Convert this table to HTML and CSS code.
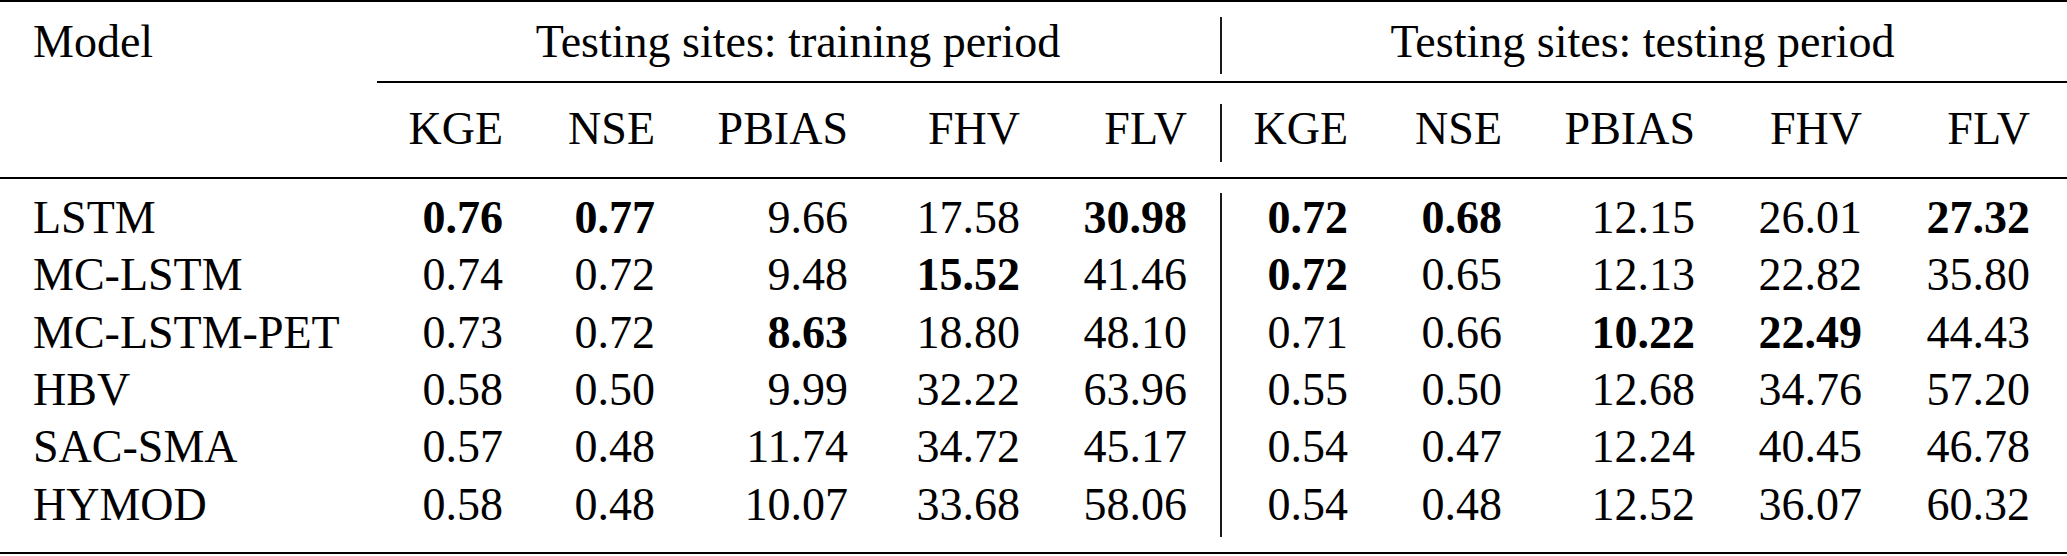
FILE: index.html
```html
<!DOCTYPE html>
<html lang="en">
<head>
<meta charset="utf-8">
<title>Results table</title>
<link rel="stylesheet" href="styles.css">
</head>
<body class="page">
<div class="tb-table">
  <div class="tb-rule tb-rule-top"></div>
  <div class="tb-line">
    <div class="tb-c tb-model">Model</div>
    <div class="tb-c tb-span tb-span-a tb-bar">Testing sites: training period</div>
    <div class="tb-c tb-span tb-span-b tb-end">Testing sites: testing period</div>
  </div>
  <div class="tb-rule tb-rule-cmid"></div>
  <div class="tb-line">
    <div class="tb-c tb-model"></div>
    <div class="tb-c">KGE</div>
    <div class="tb-c">NSE</div>
    <div class="tb-c">PBIAS</div>
    <div class="tb-c">FHV</div>
    <div class="tb-c tb-bar">FLV</div>
    <div class="tb-c">KGE</div>
    <div class="tb-c">NSE</div>
    <div class="tb-c">PBIAS</div>
    <div class="tb-c">FHV</div>
    <div class="tb-c tb-end">FLV</div>
  </div>
  <div class="tb-rule tb-rule-mid"></div>
  <div class="tb-data">
    <div class="tb-line">
      <div class="tb-c tb-model">LSTM</div>
      <div class="tb-c tb-best">0.76</div>
      <div class="tb-c tb-best">0.77</div>
      <div class="tb-c">9.66</div>
      <div class="tb-c">17.58</div>
      <div class="tb-c tb-bar tb-best">30.98</div>
      <div class="tb-c tb-best">0.72</div>
      <div class="tb-c tb-best">0.68</div>
      <div class="tb-c">12.15</div>
      <div class="tb-c">26.01</div>
      <div class="tb-c tb-end tb-best">27.32</div>
    </div>
    <div class="tb-line">
      <div class="tb-c tb-model">MC-LSTM</div>
      <div class="tb-c">0.74</div>
      <div class="tb-c">0.72</div>
      <div class="tb-c">9.48</div>
      <div class="tb-c tb-best">15.52</div>
      <div class="tb-c tb-bar">41.46</div>
      <div class="tb-c tb-best">0.72</div>
      <div class="tb-c">0.65</div>
      <div class="tb-c">12.13</div>
      <div class="tb-c">22.82</div>
      <div class="tb-c tb-end">35.80</div>
    </div>
    <div class="tb-line">
      <div class="tb-c tb-model">MC-LSTM-PET</div>
      <div class="tb-c">0.73</div>
      <div class="tb-c">0.72</div>
      <div class="tb-c tb-best">8.63</div>
      <div class="tb-c">18.80</div>
      <div class="tb-c tb-bar">48.10</div>
      <div class="tb-c">0.71</div>
      <div class="tb-c">0.66</div>
      <div class="tb-c tb-best">10.22</div>
      <div class="tb-c tb-best">22.49</div>
      <div class="tb-c tb-end">44.43</div>
    </div>
    <div class="tb-line">
      <div class="tb-c tb-model">HBV</div>
      <div class="tb-c">0.58</div>
      <div class="tb-c">0.50</div>
      <div class="tb-c">9.99</div>
      <div class="tb-c">32.22</div>
      <div class="tb-c tb-bar">63.96</div>
      <div class="tb-c">0.55</div>
      <div class="tb-c">0.50</div>
      <div class="tb-c">12.68</div>
      <div class="tb-c">34.76</div>
      <div class="tb-c tb-end">57.20</div>
    </div>
    <div class="tb-line">
      <div class="tb-c tb-model">SAC-SMA</div>
      <div class="tb-c">0.57</div>
      <div class="tb-c">0.48</div>
      <div class="tb-c">11.74</div>
      <div class="tb-c">34.72</div>
      <div class="tb-c tb-bar">45.17</div>
      <div class="tb-c">0.54</div>
      <div class="tb-c">0.47</div>
      <div class="tb-c">12.24</div>
      <div class="tb-c">40.45</div>
      <div class="tb-c tb-end">46.78</div>
    </div>
    <div class="tb-line">
      <div class="tb-c tb-model">HYMOD</div>
      <div class="tb-c">0.58</div>
      <div class="tb-c">0.48</div>
      <div class="tb-c">10.07</div>
      <div class="tb-c">33.68</div>
      <div class="tb-c tb-bar">58.06</div>
      <div class="tb-c">0.54</div>
      <div class="tb-c">0.48</div>
      <div class="tb-c">12.52</div>
      <div class="tb-c">36.07</div>
      <div class="tb-c tb-end">60.32</div>
    </div>
  </div>
  <div class="tb-rule tb-rule-bottom"></div>
</div>
</body>
</html>
```
FILE: styles.css
```css
body {
  margin: 0;
}

.page {
  background: #ffffff;
  color: #000000;
}

.tb-table {
  width: 2067px;
  font-family: "Liberation Serif", "Noto Serif", "DejaVu Serif", serif;
  font-size: 46px;
}

.tb-rule {
  background: #000000;
  height: 2px;
}

.tb-rule-top {
  margin-bottom: 15px;
}

.tb-rule-cmid {
  margin: 7px 0 21px 377px;
}

.tb-rule-mid {
  margin: 15px 0 14px 0;
}

.tb-rule-bottom {
  margin-top: 15px;
}

.tb-line {
  display: grid;
  grid-template-columns: 355px 148px 152px 193px 172px 202px 126px 154px 193px 167px 205px;
  height: 57.4px;
}

.tb-c {
  box-sizing: border-box;
  height: 57.4px;
  line-height: 49.4px;
  padding-bottom: 8px;
  text-align: right;
  white-space: nowrap;
  font-family: "Liberation Serif", "Noto Serif", "DejaVu Serif", serif;
}

.tb-model {
  text-align: left;
  padding-left: 33px;
}

.tb-bar {
  padding-right: 33px;
  border-right: 2px solid #1a1a1a;
}

.tb-end {
  padding-right: 37px;
}

.tb-span {
  text-align: center;
}

.tb-span-a {
  grid-column: 2 / 7;
  padding-left: 54px;
}

.tb-span-b {
  grid-column: 7 / 12;
  padding-left: 33px;
}

.tb-best {
  font-weight: bold;
}
```
